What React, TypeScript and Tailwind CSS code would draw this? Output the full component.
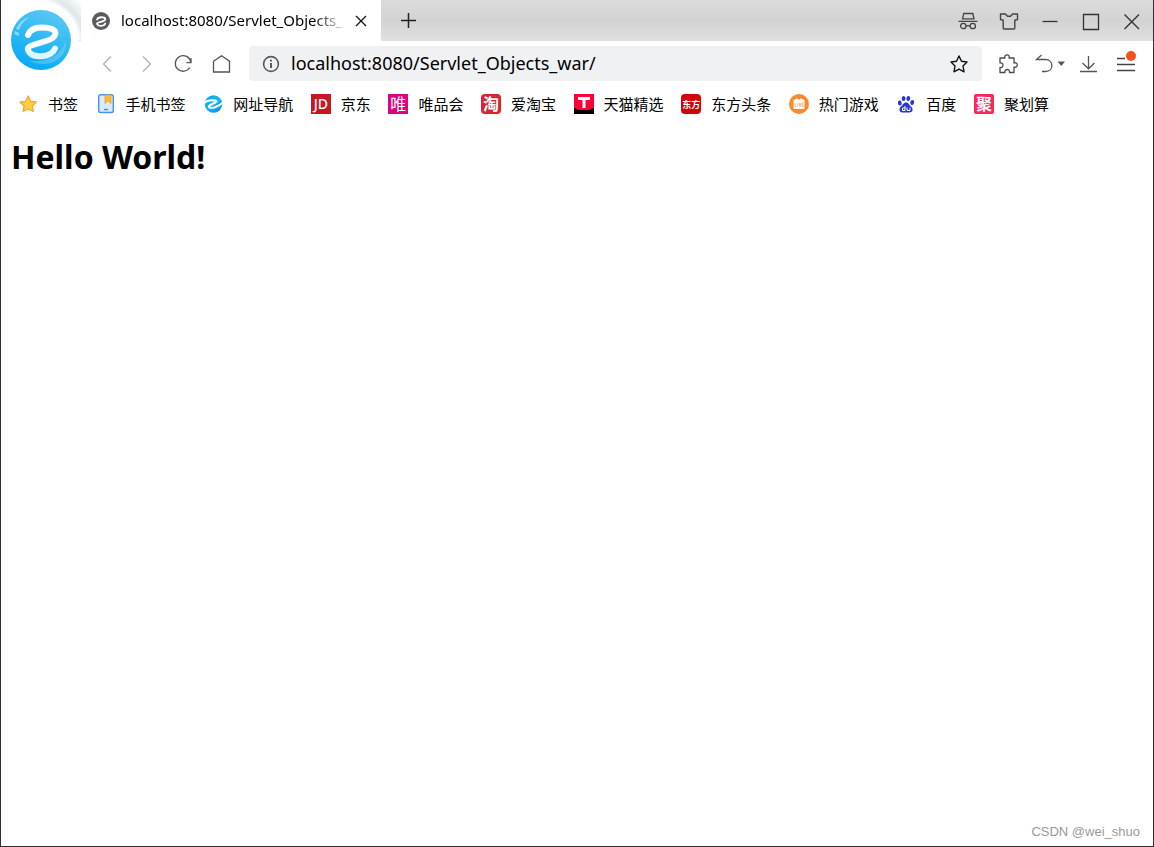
import React from 'react';

interface Bookmark {
  label: string;
  icon: React.ReactNode;
}

const UI_FONT = "font-['Noto_Sans','Noto_Sans_CJK_SC',sans-serif]";

// The "e" mark shared by the app logo and the tab favicon
const E_PATH =
  'M17 25C19 19.5 25 17.5 31 17.5C39 17.5 45 19.5 44.5 23.5C44 27.500 40 29.500 35 31L22 35C16.500 36.800 15.500 39 18.500 42.500C21.500 46 27 46.500 31 46.200C37 45.800 42 43.500 44 38.500';

const BrowserLogo: React.FC = () => (
  <svg width="60" height="60" viewBox="0 0 60 60">
    <defs>
      <linearGradient id="logoBlue" x1="0.7" y1="0" x2="0.3" y2="1">
        <stop offset="0" stopColor="#5cc8f2" />
        <stop offset="0.5" stopColor="#2db9f3" />
        <stop offset="1" stopColor="#05a9f5" />
      </linearGradient>
      <linearGradient id="logoMark" x1="0" y1="0" x2="0" y2="1">
        <stop offset="0.5" stopColor="#ffffff" />
        <stop offset="1" stopColor="#dff5fe" />
      </linearGradient>
    </defs>
    <circle cx="30" cy="30" r="30" fill="url(#logoBlue)" />
    <path d="M5 19C8 13 12 9 18 7C13 11 10 14 8 20ZM4 21L8 23V26L3 24Z" fill="#fff" opacity="0.45" />
    <path d="M55 30C57 42 47 54 34 54C28 54 22 53 18 51C36 53 50 46 55 30Z" fill="#fff" opacity="0.2" />
    <path
      d={E_PATH}
      fill="none"
      stroke="url(#logoMark)"
      strokeWidth="6"
      strokeLinecap="round"
      strokeLinejoin="round"
    />
  </svg>
);

const BackIcon = () => (
  <svg width="20" height="20" viewBox="0 0 20 20" fill="none" stroke="#b0b0b0" strokeWidth="1.3">
    <path d="M14 2.5L6.500 10L14 17.5" />
  </svg>
);

const ForwardIcon = () => (
  <svg width="20" height="20" viewBox="0 0 20 20" fill="none" stroke="#b0b0b0" strokeWidth="1.3">
    <path d="M8 2.5L15.500 10L8 17.5" />
  </svg>
);

const ReloadIcon = () => (
  <svg width="20" height="20" viewBox="0 0 20 20" fill="none" stroke="#555" strokeWidth="1.3">
    <path d="M16.8 13.5A7.8 7.8 0 1 1 17.8 8" />
    <path d="M18 4V8.700H13.500" />
  </svg>
);

const HomeIcon = () => (
  <svg width="20" height="20" viewBox="0 0 20 20" fill="none" stroke="#555" strokeWidth="1.3">
    <path d="M2.500 7.200L10.500 1.800L18.500 7.200V18H2.500Z" />
  </svg>
);

const InfoIcon = () => (
  <svg width="18" height="18" viewBox="0 0 18 18" fill="none" stroke="#5a5a5a">
    <circle cx="9" cy="9" r="7.4" strokeWidth="1.6" />
    <path d="M9 8V13M9 4.8V6.6" strokeWidth="2" />
  </svg>
);

const StarIcon = () => (
  <svg width="20" height="20" viewBox="0 0 20 20" fill="none" stroke="#111" strokeWidth="1.4" strokeLinejoin="round">
    <path d="M10 2L12.5 7.2L18 8L14 12L15 17.8L10 15.2L5 17.8L6 12L2 8L7.5 7.2Z" />
  </svg>
);

const PuzzleIcon = () => (
  <svg width="22" height="22" viewBox="0 0 22 22" fill="none" stroke="#4a4a4a" strokeWidth="1.3" strokeLinejoin="round">
    <path d="M3 5H8C7.2 2.8 8.6 1.8 10 1.8S12.8 2.8 12 5H17V10C19.2 9.2 20.3 10.6 20.3 12S19.2 14.8 17 14V19.5H12.5C12.8 17.3 11.5 16.5 10.2 16.5S7.5 17.3 7.9 19.5H3V14.5C5.2 14.8 6 13.5 6 12.2S5.2 9.5 3 9.9Z" />
  </svg>
);

const UndoIcon = () => (
  <svg width="32" height="22" viewBox="0 0 32 22" fill="none" stroke="#555" strokeWidth="1.3">
    <path d="M7.5 2L2.5 6.5H11.5C20 6.5 20 18.5 11.5 18.5H8" />
    <path d="M23.5 8.5H31L27.3 13Z" fill="#555" stroke="none" />
  </svg>
);

const DownloadIcon = () => (
  <svg width="20" height="20" viewBox="0 0 20 20" fill="none" stroke="#555" strokeWidth="1.3">
    <path d="M10.500 2V14.500M4.500 9L10.500 14.800L16.500 9M2 17.500H19" />
  </svg>
);

const MenuIcon = () => (
  <svg width="20" height="20" viewBox="0 0 20 20" fill="none" stroke="#444" strokeWidth="1.3">
    <path d="M1 4.500H9M1 10.500H19M1 16.500H19" />
  </svg>
);

const IncognitoIcon = () => (
  <svg width="20" height="20" viewBox="0 0 20 20" fill="none" stroke="#444" strokeWidth="1.3">
    <path d="M4.500 7.800L5.800 2.500H14.800L16 7.800ZM0.500 10.300H19.500" />
    <circle cx="5.300" cy="15" r="2.700" />
    <circle cx="14.800" cy="15" r="2.700" />
    <path d="M8 14.800H12" />
  </svg>
);

const ShirtIcon = () => (
  <svg width="20" height="20" viewBox="0 0 20 20" fill="none" stroke="#444" strokeWidth="1.4" strokeLinejoin="round">
    <path d="M1.500 3H6.500L8.500 5.200H11.500L13.500 3H18.500V8.500L15.800 9.200V17Q15.800 18 14.800 18H5.200Q4.200 18 4.200 17V9.200L1.500 8.500Z" />
  </svg>
);

const MinimizeIcon = () => (
  <svg width="20" height="20" viewBox="0 0 20 20" stroke="#333" strokeWidth="1.3">
    <path d="M2.5 10.5H17.5" />
  </svg>
);

const MaximizeIcon = () => (
  <svg width="20" height="20" viewBox="0 0 20 20" fill="none" stroke="#333" strokeWidth="1.3">
    <path d="M2.5 3.5H17.5V18.500H2.5Z" />
  </svg>
);

const CloseIcon = () => (
  <svg width="20" height="20" viewBox="0 0 20 20" stroke="#333" strokeWidth="1.4">
    <path d="M2.5 3.5L17 18M17 3.5L2.5 18" />
  </svg>
);

const PageIcon = () => (
  <svg width="18" height="18" viewBox="0 0 60 60">
    <circle cx="30" cy="30" r="30" fill="#5a5b60" />
    <path d={E_PATH} fill="none" stroke="#fff" strokeWidth="6" strokeLinecap="round" />
  </svg>
);

const bookmarks: Bookmark[] = [
  {
    label: '书签',
    icon: (
      <svg width="20" height="20" viewBox="0 0 20 20">
        <path
          d="M10.2 2L12.7 7.3L18.3 8L14.3 12L15.3 17.5L10.2 15L5.2 17.5L6.1 12L2 8L7.7 7.3Z"
          fill="#ffcf3f"
          stroke="#f5a836"
          strokeWidth="1.3"
          strokeLinejoin="round"
        />
      </svg>
    ),
  },
  {
    label: '手机书签',
    icon: (
      <svg width="20" height="20" viewBox="0 0 20 20">
        <rect x="2.7" y="0.7" width="14.600" height="17.800" rx="2" fill="#dce8fb" stroke="#3f94f5" strokeWidth="1.4" />
        <path d="M9 1H15V9.5L12 7L9 9.5Z" fill="#ffbd2e" stroke="#f0a030" strokeWidth="0.8" />
        <path d="M8 15.5H12" stroke="#2f86f0" strokeWidth="1.3" />
      </svg>
    ),
  },
  {
    label: '网址导航',
    icon: (
      <svg width="20" height="20" viewBox="0 0 20 20">
        <defs>
          <linearGradient id="navBlue" x1="0" y1="0" x2="1" y2="1">
            <stop offset="0" stopColor="#149fd8" />
            <stop offset="0.5" stopColor="#12b8f9" />
            <stop offset="1" stopColor="#0b7df0" />
          </linearGradient>
        </defs>
        <circle cx="10.500" cy="10" r="8.800" fill="url(#navBlue)" />
        <path
          d="M0 10C3 7 6 6.300 9.500 6.300C13.500 6.300 14.500 7 12.500 8.300C10 9.800 7 10.500 6 12C5.500 14 9 14.300 12 13.300C15 12.300 18 10.500 20 8"
          fill="none"
          stroke="#fff"
          strokeWidth="2"
        />
      </svg>
    ),
  },
  {
    label: '京东',
    icon: (
      <span className="flex size-5 items-center justify-center bg-[#c91623] text-sm font-medium text-white">JD</span>
    ),
  },
  {
    label: '唯品会',
    icon: <span className="flex size-5 items-center justify-center bg-[#d9057c] text-base text-white">唯</span>,
  },
  {
    label: '爱淘宝',
    icon: (
      <span className="flex size-5 items-center justify-center rounded-sm bg-[#d9232e] text-base font-bold text-white">淘</span>
    ),
  },
  {
    label: '天猫精选',
    icon: (
      <svg width="20" height="20" viewBox="0 0 20 20">
        <path d="M0 0H20V20H0Z" fill="#ff0036" />
        <path d="M0 14C2 14 3 16 5 16H15C17 16 18 14 20 14V20H0Z" fill="#000" />
        <path d="M4 3H16V6H11.5V14H8.5V6H4Z" fill="#fff" />
      </svg>
    ),
  },
  {
    label: '东方头条',
    icon: (
      <span className="flex size-5 items-center justify-center rounded bg-[#d3040b] text-[9px] font-bold text-white">东方</span>
    ),
  },
  {
    label: '热门游戏',
    icon: (
      <svg width="20" height="20" viewBox="0 0 20 20">
        <circle cx="10" cy="10" r="10" fill="#f98a2b" />
        <path d="M5 6H7V5H8.500V6H11.500V5H13V6H15V14.500H5Z" fill="#fff" stroke="#fff" strokeLinejoin="round" />
        <path
          d="M6 9V12.5H7.500M8.800 9V12.500M10 9L11 12.500L12 9M14.800 9H13.200V12.500H14.800M13.200 10.800H14.600"
          fill="none"
          stroke="#fba75d"
          strokeWidth="0.8"
        />
      </svg>
    ),
  },
  {
    label: '百度',
    icon: (
      <svg width="20" height="20" viewBox="0 0 20 20" fill="#2932e1">
        <ellipse cx="3.8" cy="9" rx="1.9" ry="2.5" transform="rotate(-10 3.8 9)" />
        <ellipse cx="7.6" cy="4.5" rx="1.9" ry="2.6" />
        <ellipse cx="12.3" cy="4.5" rx="1.9" ry="2.6" transform="rotate(10 12.3 4.5)" />
        <ellipse cx="16.2" cy="8.5" rx="1.9" ry="2.5" transform="rotate(10 16.2 8.5)" />
        <path d="M10 8.5C12.5 8.5 13 11 15 12.5C17.5 14.5 17 18.5 13.5 18.5H6.5C3 18.5 2.5 14.5 5 12.5C7 11 7.5 8.5 10 8.5Z" />
        <path d="M9 12V16.5H6.500V14H9M11 13.500V16.500H14V13.500" fill="none" stroke="#fff" strokeWidth="1" />
      </svg>
    ),
  },
  {
    label: '聚划算',
    icon: (
      <span className="flex size-5 items-center justify-center rounded-xs bg-[#f8285c] text-base font-bold text-white">聚</span>
    ),
  },
];

const windowButtons = [
  { name: 'Incognito', icon: <IncognitoIcon /> },
  { name: 'Skins', icon: <ShirtIcon /> },
  { name: 'Minimize', icon: <MinimizeIcon /> },
  { name: 'Maximize', icon: <MaximizeIcon /> },
  { name: 'Close', icon: <CloseIcon /> },
];

const TabBar: React.FC = () => (
  <div className="flex h-[41px] bg-linear-to-b from-[#dcdcdc] via-[#d3d3d3] to-[#e0e0e0] pr-px pl-20">
    <div className="flex w-[300px] items-center bg-white pr-[10px] pl-[11px]">
      <PageIcon />
      <span className="ml-[11px] flex-1 overflow-hidden text-[15px] whitespace-nowrap text-black [mask-image:linear-gradient(to_right,black_85%,transparent)]">
        localhost:8080/Servlet_Objects_
      </span>
      <button aria-label="Close tab" className="ml-1 flex size-5 items-center justify-center">
        <svg width="12" height="12" viewBox="0 0 12 12" stroke="#111" strokeWidth="1.3">
          <path d="M1 1L11 11M11 1L1 11" />
        </svg>
      </button>
    </div>
    <button aria-label="New tab" className="ml-4 flex w-6 items-center justify-center">
      <svg width="16" height="16" viewBox="0 0 16 16" stroke="#222" strokeWidth="1.5">
        <path d="M7.500 0V15M0 7.500H15" />
      </svg>
    </button>
    <div className="ml-auto flex">
      {windowButtons.map((b) => (
        <button key={b.name} aria-label={b.name} className="flex w-[41px] items-center justify-center">
          {b.icon}
        </button>
      ))}
    </div>
  </div>
);

const Toolbar: React.FC = () => (
  <div className="flex h-[45px] items-center pr-2 pl-[87px]">
    <button aria-label="Back" className="flex w-[38px] justify-center"><BackIcon /></button>
    <button aria-label="Forward" className="flex w-[38px] justify-center"><ForwardIcon /></button>
    <button aria-label="Reload" className="flex w-[38px] justify-center"><ReloadIcon /></button>
    <button aria-label="Home" className="flex w-[38px] justify-center"><HomeIcon /></button>
    <div className="ml-[9px] flex h-[35px] flex-1 items-center rounded-sm bg-[#f0f1f3] px-[13px]">
      <InfoIcon />
      <input
        type="text"
        aria-label="Address"
        defaultValue="localhost:8080/Servlet_Objects_war/"
        className="ml-[11px] min-w-0 flex-1 bg-transparent pb-0.5 text-lg text-black outline-none"
      />
      <button aria-label="Add bookmark"><StarIcon /></button>
    </div>
    <button aria-label="Extensions" className="ml-[3px] flex w-[46px] justify-center"><PuzzleIcon /></button>
    <button aria-label="Undo close tab" className="flex w-[38px] justify-center"><UndoIcon /></button>
    <button aria-label="Downloads" className="flex w-[38px] justify-center"><DownloadIcon /></button>
    <button aria-label="Menu" className="relative flex w-[38px] justify-center">
      <MenuIcon />
      <span className="absolute -top-[3px] right-[9px] size-[10px] rounded-full bg-[#f4511e]" />
    </button>
  </div>
);

const BookmarkBar: React.FC = () => (
  <nav className="flex h-9 max-w-[1048px] items-center justify-between pl-[17px] text-[15px] text-black">
    {bookmarks.map((b) => (
      <a key={b.label} href="#" className="flex items-center gap-[10px] whitespace-nowrap">
        <span aria-hidden="true" className="flex size-5 overflow-hidden leading-none">{b.icon}</span>
        {b.label}
      </a>
    ))}
  </nav>
);

export default function App() {
  return (
    <div className={`relative flex min-h-screen flex-col border-x border-b border-[#2f3033] bg-white ${UI_FONT}`}>
      <header className="relative">
        <TabBar />
        <Toolbar />
        <BookmarkBar />
        {/* Logo sits over the tab bar and the toolbar, with a soft shadow towards the top right */}
        <div className="absolute top-0 left-0 size-20 bg-white">
          <div className="h-[41px] border-b border-[#dfe3e6] bg-[radial-gradient(circle_at_40px_40px,#ffffff_37px,#dde6ea_42px,#ffffff_56px)] [mask-image:linear-gradient(to_right,transparent_45%,black_75%)]" />
          <div className="absolute inset-x-0.5 top-0.5 flex h-[76px] items-center justify-center rounded-full bg-white">
            <BrowserLogo />
          </div>
        </div>
      </header>
      <main className="flex-1 px-[10px] pt-[13px]">
        <h1 className="text-[32px] leading-[44px] font-bold text-black">Hello World!</h1>
      </main>
      <footer className="px-[13px] pb-[5px] text-right font-['Liberation_Sans',sans-serif] text-[13px] text-[#999]">
        CSDN @wei_shuo
      </footer>
    </div>
  );
}
